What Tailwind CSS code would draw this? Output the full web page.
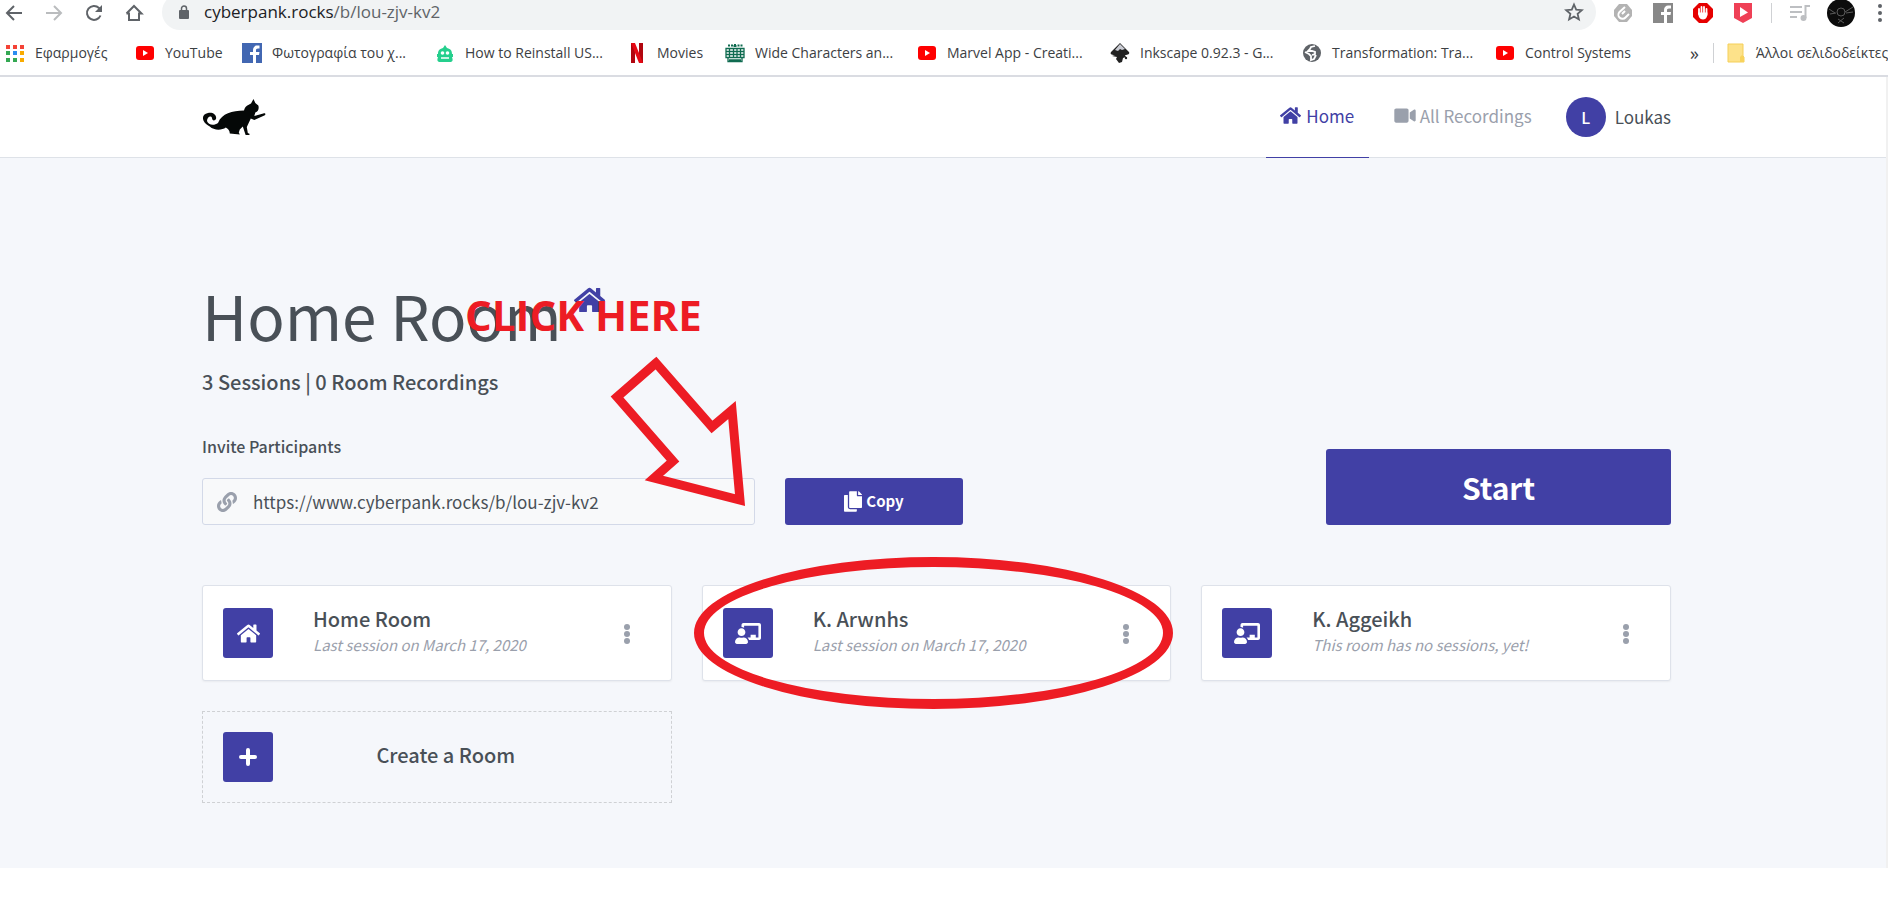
<!DOCTYPE html>
<html lang="en">
<head>
<meta charset="utf-8">
<title>Home Room</title>
<script src="https://cdn.jsdelivr.net/npm/@tailwindcss/browser@4"></script>
</head>
<body class="min-h-screen overflow-x-hidden bg-white font-['Noto_Sans_CJK_JP',sans-serif] text-[#495057]">

<svg class="hidden" aria-hidden="true">
  <symbol id="home" viewBox="0 0 576 512"><path d="M280.37 148.26L96 300.11V464a16 16 0 0 0 16 16l112.06-.29a16 16 0 0 0 15.92-16V368a16 16 0 0 1 16-16h64a16 16 0 0 1 16 16v95.64a16 16 0 0 0 16 16.05L464 480a16 16 0 0 0 16-16V300L295.67 148.26a12.19 12.19 0 0 0-15.3 0zM571.6 251.47L488 182.56V44.05a12 12 0 0 0-12-12h-56a12 12 0 0 0-12 12v72.61L318.47 43a48 48 0 0 0-61 0L4.34 251.47a12 12 0 0 0-1.6 16.9l25.5 31A12 12 0 0 0 45.15 301l235.22-193.74a12.19 12.19 0 0 1 15.3 0L530.9 301a12 12 0 0 0 16.9-1.6l25.5-31a12 12 0 0 0-1.7-16.93z"/></symbol>
  <symbol id="teacher" viewBox="0 0 640 512"><path d="M208 352c-2.39 0-4.78.35-7.06 1.09C187.98 357.3 174.35 360 160 360c-14.35 0-27.98-2.7-40.95-6.91-2.28-.74-4.66-1.09-7.05-1.09C49.94 352-.33 402.48 0 464.62.14 490.88 21.73 512 48 512h224c26.27 0 47.86-21.12 48-47.38.33-62.14-49.94-112.62-112-112.62zm-48-32c53.02 0 96-42.98 96-96s-42.98-96-96-96-96 42.98-96 96 42.98 96 96 96zM592 0H208c-26.47 0-48 22.25-48 49.59V96c23.42 0 45.1 6.78 64 17.8V64h352v288h-64v-64H384v64h-76.24c19.1 16.69 33.12 38.73 39.69 64H592c26.47 0 48-22.25 48-49.59V49.59C640 22.25 618.47 0 592 0z"/></symbol>
  <symbol id="dots" viewBox="0 0 6 20"><circle cx="3" cy="3" r="3"/><circle cx="3" cy="10" r="3"/><circle cx="3" cy="17" r="3"/></symbol>
  <symbol id="youtube" viewBox="0 0 20 20"><rect x="1" y="3" width="18" height="14" rx="3" fill="#f00"/><path d="M8 7l5 3-5 3z" fill="#fff"/></symbol>
</svg>

<!-- Browser toolbar -->
<div class="bg-white font-['Open_Sans',sans-serif]">
  <div class="flex h-[30px] items-start overflow-hidden pr-[6px]">
    <div class="flex shrink-0 gap-5 pl-1 pt-[3px] text-[#5f6368]">
      <button aria-label="Back" class="h-5 w-5"><svg viewBox="0 0 20 20" fill="none" stroke="currentColor" stroke-width="2"><path d="M18 10H3M10 3l-7 7 7 7"/></svg></button>
      <button aria-label="Forward" class="h-5 w-5 text-[#babcbe]"><svg viewBox="0 0 20 20" fill="none" stroke="currentColor" stroke-width="2"><path d="M2 10h15M10 3l7 7-7 7"/></svg></button>
      <button aria-label="Reload" class="h-5 w-5"><svg viewBox="0 0 20 20" fill="none" stroke="currentColor" stroke-width="2"><path d="M16.500 12.500A7 7 0 1 1 15 5l2 2"/><path d="M18 2v7h-7z" fill="currentColor" stroke="none"/></svg></button>
      <button aria-label="Home page" class="h-5 w-5"><svg viewBox="0 0 20 20" fill="none" stroke="currentColor" stroke-width="2"><path d="M5 9.500V17h10V9.500M2.500 10.500L10 3l7.500 7.500H15M2.500 10.500H5"/></svg></button>
    </div>
    <div class="-mt-[6px] ml-[18px] flex h-9 min-w-0 flex-1 items-center rounded-full bg-[#f1f3f4] pl-4 pr-3">
      <svg class="h-[14px] w-3 shrink-0 text-[#5f6368]" viewBox="0 0 12 14" fill="none"><rect x="1" y="5" width="10" height="9" rx="1" fill="currentColor"/><path d="M3.500 6V3.500a2.500 2.500 0 0 1 5 0V6" stroke="currentColor" stroke-width="1.500"/></svg>
      <p class="ml-[14px] flex-1 text-[17px] leading-5 text-[#5f6368]"><span class="text-[#202124]">cyberpank.rocks</span>/b/lou-zjv-kv2</p>
      <button aria-label="Bookmark this page" class="h-5 w-5 shrink-0 text-[#5f6368]"><svg viewBox="0 0 20 20" fill="none" stroke="currentColor" stroke-width="1.800"><path d="M10 2.500l2.200 5.200 5.600.5-4.200 3.700 1.300 5.500L10 14.500l-4.900 2.900 1.300-5.500L2.200 8.200l5.600-.5z"/></svg></button>
    </div>
    <div class="flex shrink-0 items-start gap-5 pl-[17px] pt-[3px]">
      <svg class="h-5 w-5" viewBox="0 0 20 20"><path d="M6 1h8l5 6v6l-5 6H6l-5-6V7z" fill="#b3b3b3"/><path d="M12 4L6.500 9a4 4 0 0 0 6 5.500L16 11M12 8l-3 3" fill="none" stroke="#fff" stroke-width="2"/></svg>
      <svg class="h-5 w-5" viewBox="0 0 20 20"><path fill="#888" d="M0 0h20v20H0z"/><path d="M11 20v-8H8V9h3V7c0-3 2-4.500 4-4.500h3v3h-2c-1.500 0-2 .7-2 1.800V9h4l-.5 3H14v8z" fill="#fff"/></svg>
      <svg class="h-5 w-5" viewBox="0 0 20 20"><path d="M6 0h8l6 6v8l-6 6H6l-6-6V6z" fill="#e60000"/><path d="M6 6v5M8.500 4v7M11 4v7M13.500 6v6" stroke="#fff" stroke-width="1.800" stroke-linecap="round"/><path d="M5.200 9.500h9.200c0 4-.9 7-4.400 7s-4.800-3-4.800-7z" fill="#fff"/></svg>
      <svg class="h-5 w-5" viewBox="0 0 20 20"><path d="M1 0h18v15l-9 5-9-5z" fill="#ef4056"/><path d="M7 4l8 5.500L7 14z" fill="#fff"/></svg>
    </div>
    <div class="ml-[18px] mt-[3px] h-5 w-px shrink-0 bg-[#cfd1d4]"></div>
    <svg class="ml-[18px] mt-[3px] h-5 w-5 shrink-0" viewBox="0 0 20 20" fill="none" stroke="#bdbfc2" stroke-width="2"><path d="M0 4h12M0 9h12M0 14h7M15.500 15V3H20"/><circle cx="13.500" cy="15" r="2" fill="#bdbfc2"/></svg>
    <svg class="-mt-px ml-[17px] h-7 w-7 shrink-0" viewBox="0 0 28 28"><circle cx="14" cy="14" r="14" fill="#0c0c0c"/><g fill="none" stroke="#5a5a5a"><circle cx="14" cy="13" r="4"/><path d="M2 10l6 4M26 8l-8 5M11 20l6 4M17 19l-6 5M3 15l6-1M19 14l7-1"/></g></svg>
    <button aria-label="Browser menu" class="ml-[23px] mt-1 h-[18px] w-1 shrink-0 text-[#5f6368]"><svg viewBox="0 0 4 18" fill="currentColor"><circle cx="2" cy="2" r="2"/><circle cx="2" cy="9" r="2"/><circle cx="2" cy="16" r="2"/></svg></button>
  </div>

  <!-- Bookmarks bar -->
  <nav aria-label="Bookmarks" class="flex h-[47px] items-center overflow-hidden whitespace-nowrap border-b-2 border-[#dadce2] pl-[5px] text-sm text-[#3c4043] *:shrink-0">
    <a href="#" class="flex w-[130px] items-center gap-[10px]"><svg class="h-5 w-5" viewBox="0 0 20 20"><path fill="#f44336" d="M1 2h4v4H1zM8 2h4v4H8zM15 2h4v4h-4z"/><path fill="#34a853" d="M1 8h4v4H1zM1 15h4v4H1zM8 15h4v4H8z" /><path fill="#2b8cf0" d="M8 8h4v4H8z"/><path fill="#f9ab00" d="M15 8h4v4h-4zM15 15h4v4h-4z"/></svg>Εφαρμογές</a>
    <a href="#" class="flex w-[107px] items-center gap-[10px]"><svg class="h-5 w-5"><use href="#youtube"/></svg>YouTube</a>
    <a href="#" class="flex w-[193px] items-center gap-[10px]"><svg class="h-5 w-5" viewBox="0 0 20 20"><path fill="#4267b2" d="M0 0h20v20H0z"/><path d="M11 20v-8H8V9h3V7c0-3 2-4.500 4-4.500h2.500v3H16c-1.500 0-2 .7-2 1.800V9h3.500l-.5 3h-3v8z" fill="#fff"/></svg>Φωτογραφία του χ...</a>
    <a href="#" class="flex w-[192px] items-center gap-[10px]"><svg class="h-5 w-5" viewBox="0 0 20 20"><path d="M10 2l2 3c4 1 5 3 5 6h1v3h-1c1 3 1 4-1 5H4c-2-1-2-2-1-5H2v-3h1c0-3 1-5 5-6z" fill="#25cf8d"/><circle cx="7.500" cy="10" r="1.800" fill="#fff"/><circle cx="12.500" cy="10" r="1.800" fill="#fff"/><path d="M6 15h8" stroke="#fff" stroke-width="1.500"/></svg>How to Reinstall US...</a>
    <a href="#" class="flex w-[98px] items-center gap-[10px]"><svg class="h-5 w-5" viewBox="0 0 20 20"><path fill="#b1060f" d="M4 0h4v20H4zM12 0h4v20h-4z"/><path fill="#e50914" d="M4 0h4l8 20h-4z"/></svg>Movies</a>
    <a href="#" class="flex w-[192px] items-center gap-[10px]"><svg class="h-5 w-5" viewBox="0 0 20 20" stroke="#0f6b50" fill="none"><path d="M1 5.500h18v9H1zM1 8.500h18M1 11.500h18M4.500 5v10M8.500 5v10M12 5v10M15.500 5v10" stroke-width="1.300"/><path d="M3 14.500v4h14v-4M4 17h12" stroke-width="1.300"/><path d="M3 2.500h2M6 2.500h2M12.500 2.500h2M15.500 2.500h2M8.500 3h3M10 1v3" stroke-width="2"/></svg>Wide Characters an...</a>
    <a href="#" class="flex w-[193px] items-center gap-[10px]"><svg class="h-5 w-5"><use href="#youtube"/></svg>Marvel App - Creati...</a>
    <a href="#" class="flex w-[192px] items-center gap-[10px]"><svg class="h-5 w-5" viewBox="0 0 20 20"><path d="M10 0l9 9c1 2-1 3-4 3l1 2-3 1-1 4-3 1-3-4 1-2-5-1 3-1c-4 0-5-1-4-3z" fill="#222"/><path d="M10 1l5 5-3 1-2-1-2 2-3-1z" fill="#c9cbd3"/><circle cx="16" cy="15" r="1.200" fill="#222"/></svg>Inkscape 0.92.3 - G...</a>
    <a href="#" class="flex w-[193px] items-center gap-[10px]"><svg class="h-5 w-5" viewBox="0 0 20 20"><circle cx="10" cy="10" r="9" fill="#5f6368"/><path d="M13 3l-4 1-1 2-2 2h4l3 1v2l-3 1M3 9l4 2 2 2v4l3-1 2-4" fill="none" stroke="#fff" stroke-width="1.800"/></svg>Transformation: Tra...</a>
    <a href="#" class="flex w-[195px] items-center gap-[10px]"><svg class="h-5 w-5"><use href="#youtube"/></svg>Control Systems</a>
    <button aria-label="More bookmarks" class="w-[23px] text-left text-lg leading-5">»</button>
    <span class="h-5 w-px bg-[#cfd1d4]"></span>
    <a href="#" class="ml-3 flex items-center gap-[10px]"><svg class="h-5 w-5" viewBox="0 0 20 20"><path d="M2 1h15v12l1 1v5H2z" fill="#fde28a" stroke="#f5cf58"/><path d="M14 19v-5l2-2 2 2v5z" fill="#f8d35c"/></svg>Άλλοι σελιδοδείκτες</a>
  </nav>
</div>

<div class="border-r-2 border-[#f1f1f1]">
<!-- Site header -->
<header class="border-b border-[#dee2e8] bg-white pr-[13px]">
  <div class="mx-auto flex h-20 max-w-[1469px] items-stretch">
    <a href="#" aria-label="Cyberpank" class="flex items-center"><svg class="h-9 w-16" viewBox="0 0 64 36"><path d="M51.500 0l1.800 4 3 2.500c1 3 0 6-3 7l-1 3.500 9-2.500c2-1 3 1 1 2l-10 4.500-3.500-1.500-4 8.500 1 6 2 1-1 1.500h-3l-3-9-3 3-1 3 1 2-10-1c0-3-2-5-4-6-4 3-12 3-16-1C-1 23-1 15 6 14c5-1 9 2 8 6-1 2-4 2-4-1-1-3-5-1-5 3 1 4 7 5 11 2 4-10 14-12 26-12.500 1-4 3-5 7-7z" fill="#050807"/></svg></a>
    <nav class="ml-auto flex text-[17px] leading-6">
      <a href="#" class="-mb-px flex w-[103px] items-center justify-center gap-[5px] border-b border-[#4140a5] pb-[3px] text-[#4140a5]"><svg class="h-[19px] w-[21px]" fill="currentColor"><use href="#home"/></svg>Home</a>
      <a href="#" class="ml-[25px] flex items-center gap-1 pb-[3px] text-[#9aa0ac]"><svg class="h-[19px] w-[22px]" viewBox="0 0 576 512" fill="currentColor"><path d="M336.200 64H47.800C21.400 64 0 85.400 0 111.800v288.400C0 426.600 21.400 448 47.800 448h288.400c26.400 0 47.800-21.400 47.800-47.800V111.800c0-26.400-21.400-47.800-47.800-47.800zm189.400 37.700L416 177.300v157.400l109.600 75.500c21.200 14.600 50.400-.3 50.400-25.800V127.500c0-25.400-29.100-40.400-50.400-25.800z"/></svg>All Recordings</a>
      <a href="#" class="ml-[34px] flex items-center gap-[9px]"><span class="flex h-10 w-10 items-center justify-center rounded-full bg-[#4140a5] text-base font-medium text-white">L</span>Loukas</a>
    </nav>
  </div>
</header>

<!-- Room -->
<main class="bg-[#f5f7fb] pb-[65px] pr-[13px] pt-[118px]">
  <div class="relative mx-auto max-w-[1469px]">
    <h1 class="flex items-start text-[62px] leading-[76px]">Home Room<svg class="ml-3 mt-[10px] h-[28px] w-[31px] text-[#4140a5]" fill="currentColor"><use href="#home"/></svg></h1>
    <p class="mt-[14px] text-[20px] font-medium leading-8">3 Sessions | 0 Room Recordings</p>
    <div class="mt-9 flex items-end">
      <div class="w-[553px]">
        <label for="invite" class="block text-base font-medium leading-6">Invite Participants</label>
        <div class="relative mt-5">
          <svg class="absolute left-[15px] top-[14px] h-5 w-5 text-[#9aa0ac]" viewBox="0 0 512 512" fill="currentColor"><path d="M326.612 185.391c59.747 59.809 58.927 155.698.36 214.590-.11.12-.24.25-.36.37l-67.200 67.200c-59.270 59.270-155.699 59.262-214.960 0-59.270-59.260-59.270-155.700 0-214.960l37.106-37.106c9.840-9.840 26.786-3.300 27.294 10.606.648 17.722 3.826 35.527 9.690 52.721 1.986 5.822.567 12.262-3.783 16.612l-13.087 13.087c-28.026 28.026-28.905 73.660-1.155 101.960 28.024 28.579 74.086 28.749 102.325.51l67.200-67.190c28.191-28.191 28.073-73.757 0-101.830-3.701-3.694-7.429-6.564-10.341-8.569a16.037 16.037 0 0 1-6.947-12.606c-.396-10.567 3.348-21.456 11.698-29.806l21.054-21.055c5.521-5.521 14.182-6.199 20.584-1.731a152.482 152.482 0 0 1 20.522 17.197zM467.547 44.449c-59.261-59.262-155.690-59.270-214.960 0l-67.200 67.200c-.12.12-.25.25-.36.37-58.566 58.892-59.387 154.781.36 214.590a152.454 152.454 0 0 0 20.521 17.196c6.402 4.468 15.064 3.789 20.584-1.731l21.054-21.055c8.350-8.350 12.094-19.239 11.698-29.806a16.037 16.037 0 0 0-6.947-12.606c-2.912-2.005-6.640-4.875-10.341-8.569-28.073-28.073-28.191-73.639 0-101.830l67.200-67.190c28.239-28.239 74.300-28.069 102.325.51 27.750 28.300 26.872 73.934-1.155 101.960l-13.087 13.087c-4.350 4.350-5.769 10.790-3.783 16.612 5.864 17.194 9.042 34.999 9.690 52.721.509 13.906 17.454 20.446 27.294 10.606l37.106-37.106c59.271-59.259 59.271-155.699.001-214.959z"/></svg>
          <input id="invite" type="text" readonly value="https://www.cyberpank.rocks/b/lou-zjv-kv2" class="h-[47px] w-full rounded-[3px] border border-[#d3d9e8] bg-[#f8f9fa] pl-[50px] text-[17px]">
        </div>
      </div>
      <button class="ml-[30px] flex h-[47px] w-[178px] items-center justify-center gap-1 rounded-[3px] bg-[#4140a5] text-[15px] font-bold text-white"><svg class="h-[21px] w-[18px]" viewBox="0 0 448 512" fill="currentColor"><path d="M320 448v40c0 13.255-10.745 24-24 24H24c-13.255 0-24-10.745-24-24V120c0-13.255 10.745-24 24-24h72v296c0 30.879 25.121 56 56 56h168zm0-344V0H152c-13.255 0-24 10.745-24 24v368c0 13.255 10.745 24 24 24h272c13.255 0 24-10.745 24-24V128H344c-13.200 0-24-10.800-24-24zm120.971-31.029L375.029 7.029A24 24 0 0 0 358.059 0H352v96h96v-6.059a24 24 0 0 0-7.029-16.970z"/></svg>Copy</button>
      <button class="ml-auto h-[76px] w-[345px] rounded-[3px] bg-[#4140a5] text-[30px] font-bold text-white">Start</button>
    </div>

    <div class="mt-[60px] grid grid-cols-3 gap-[30px]">
      <section class="flex h-24 items-center rounded-[3px] border border-[#dee2ea] bg-white pl-5 pr-[41px] shadow-xs">
        <span class="flex h-[50px] w-[50px] shrink-0 items-center justify-center rounded-[3px] bg-[#4140a5] text-white"><svg class="h-[21px] w-[23px]" fill="currentColor"><use href="#home"/></svg></span>
        <div class="ml-10 flex-1"><h2 class="text-[20px] font-medium leading-6">Home Room</h2><p class="text-[15px] italic leading-7 text-[#9aa0ac]">Last session on March 17, 2020</p></div>
        <button aria-label="Home Room options" class="pt-[2px] text-[#9aa0ac]"><svg class="h-5 w-[6px]" fill="currentColor"><use href="#dots"/></svg></button>
      </section>
      <section class="relative flex h-24 items-center rounded-[3px] border border-[#dee2ea] bg-white pl-5 pr-[41px] shadow-xs">
        <span class="flex h-[50px] w-[50px] shrink-0 items-center justify-center rounded-[3px] bg-[#4140a5] text-white"><svg class="h-[21px] w-[26px]" fill="currentColor"><use href="#teacher"/></svg></span>
        <div class="ml-10 flex-1"><h2 class="text-[20px] font-medium leading-6">K. Arwnhs</h2><p class="text-[15px] italic leading-7 text-[#9aa0ac]">Last session on March 17, 2020</p></div>
        <button aria-label="K. Arwnhs options" class="pt-[2px] text-[#9aa0ac]"><svg class="h-5 w-[6px]" fill="currentColor"><use href="#dots"/></svg></button>
        <div class="pointer-events-none absolute -bottom-[29px] -left-[9px] -right-[3px] -top-[29px] rounded-[50%] border-10 border-[#ed1c24]"></div>
      </section>
      <section class="flex h-24 items-center rounded-[3px] border border-[#dee2ea] bg-white pl-5 pr-[41px] shadow-xs">
        <span class="flex h-[50px] w-[50px] shrink-0 items-center justify-center rounded-[3px] bg-[#4140a5] text-white"><svg class="h-[21px] w-[26px]" fill="currentColor"><use href="#teacher"/></svg></span>
        <div class="ml-10 flex-1"><h2 class="text-[20px] font-medium leading-6">K. Aggeikh</h2><p class="text-[15px] italic leading-7 text-[#9aa0ac]">This room has no sessions, yet!</p></div>
        <button aria-label="K. Aggeikh options" class="pt-[2px] text-[#9aa0ac]"><svg class="h-5 w-[6px]" fill="currentColor"><use href="#dots"/></svg></button>
      </section>
      <button class="flex h-[92px] items-center border border-dashed border-[#cfd1d4] pl-5 pr-[52px]">
        <span class="flex h-[50px] w-[50px] shrink-0 items-center justify-center rounded-[3px] bg-[#4140a5]"><svg class="h-[18px] w-[18px]" viewBox="0 0 18 18" stroke="#fff" stroke-width="4" stroke-linecap="round"><path d="M9 2v14M2 9h14"/></svg></span>
        <span class="flex-1 pb-1 text-center text-[20px] font-medium leading-6">Create a Room</span>
      </button>
    </div>

    <!-- Red annotations -->
    <p class="pointer-events-none absolute left-[263px] top-[9px] font-['Open_Sans',sans-serif] text-[42px] font-bold leading-[60px] text-[#ed1c24]">CLICK HERE</p>
    <svg class="pointer-events-none absolute left-[402px] top-[76px] h-[160px] w-[150px]" viewBox="604 352 150 160" fill="none" stroke="#ed1c24" stroke-width="9"><path d="M656 363L617 397L673 461L654 478L740 500L732 410L712 427Z"/></svg>
  </div>
</main>
</div>
</body>
</html>
